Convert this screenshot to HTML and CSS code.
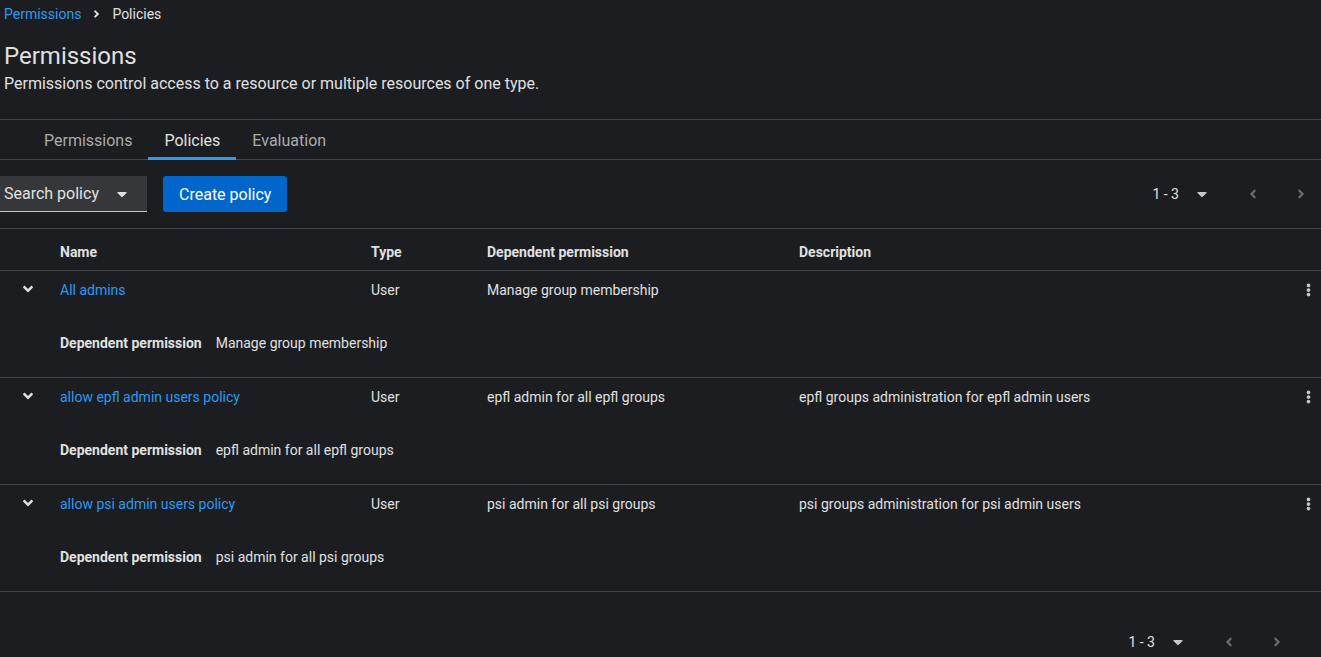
FILE: index.html
```html
<!DOCTYPE html>
<html lang="en">
<head>
<meta charset="utf-8">
<title>Permissions - Policies</title>
<link rel="stylesheet" href="styles.css">
</head>
<body>
<nav class="breadcrumb">
  <a class="crumb-link" href="#">Permissions</a>
  <svg class="crumb-sep" viewBox="0 0 256 512"><path d="M224.3 273l-136 136c-9.4 9.4-24.6 9.4-33.9 0l-22.6-22.6c-9.4-9.4-9.4-24.6 0-33.9l96.4-96.4-96.4-96.4c-9.4-9.4-9.4-24.6 0-33.9L54.3 103c9.4-9.4 24.6-9.4 33.9 0l136 136c9.5 9.4 9.5 24.6.1 34z"/></svg>
  <span class="crumb-current">Policies</span>
</nav>

<header class="page-header">
  <h1 class="title">Permissions</h1>
  <p class="subtitle">Permissions control access to a resource or multiple resources of one type.</p>
</header>

<div class="tabs">
  <button class="tab">Permissions</button>
  <button class="tab active">Policies</button>
  <button class="tab">Evaluation</button>
</div>

<div class="toolbar">
  <div class="toolbar-left">
    <button class="search-select">
      <span>Search policy</span>
      <svg class="caret" viewBox="0 0 320 512"><path d="M31.3 192h257.3c17.8 0 26.7 21.5 14.1 34.1L174.1 354.8c-7.8 7.8-20.5 7.8-28.3 0L17.2 226.1C4.6 213.5 13.5 192 31.3 192z"/></svg>
    </button>
    <button class="btn-primary">Create policy</button>
  </div>
  <div class="pagination">
    <span class="page-range">1 - 3</span>
    <svg class="caret small" viewBox="0 0 320 512"><path d="M31.3 192h257.3c17.8 0 26.7 21.5 14.1 34.1L174.1 354.8c-7.8 7.8-20.5 7.8-28.3 0L17.2 226.1C4.6 213.5 13.5 192 31.3 192z"/></svg>
    <svg class="nav-arrow" viewBox="0 0 256 512"><path d="M31.7 239l136-136c9.4-9.4 24.6-9.4 33.9 0l22.6 22.6c9.4 9.4 9.4 24.6 0 33.9L127.9 256l96.4 96.4c9.4 9.4 9.4 24.6 0 33.9L201.7 409c-9.4 9.4-24.6 9.4-33.9 0l-136-136c-9.5-9.4-9.5-24.6-.1-34z"/></svg>
    <svg class="nav-arrow" viewBox="0 0 256 512"><path d="M224.3 273l-136 136c-9.4 9.4-24.6 9.4-33.9 0l-22.6-22.6c-9.4-9.4-9.4-24.6 0-33.9l96.4-96.4-96.4-96.4c-9.4-9.4-9.4-24.6 0-33.9L54.3 103c9.4-9.4 24.6-9.4 33.9 0l136 136c9.5 9.4 9.5 24.6.1 34z"/></svg>
  </div>
</div>

<div class="table">
  <div class="row head">
    <div></div>
    <div>Name</div>
    <div>Type</div>
    <div>Dependent permission</div>
    <div>Description</div>
    <div></div>
  </div>

  <div class="group">
    <div class="row main">
      <svg class="toggle" viewBox="0 0 320 512"><path d="M143 352.3L7 216.3c-9.4-9.4-9.4-24.6 0-33.9l22.6-22.6c9.4-9.4 24.6-9.4 33.9 0l96.4 96.4 96.4-96.4c9.4-9.4 24.6-9.4 33.9 0l22.6 22.6c9.4 9.4 9.4 24.6 0 33.9l-136 136c-9.2 9.4-24.4 9.4-33.8 0z"/></svg>
      <a class="link" href="#">All admins</a>
      <div>User</div>
      <div>Manage group membership</div>
      <div></div>
      <svg class="kebab" viewBox="0 0 192 512"><path d="M96 184c39.8 0 72 32.2 72 72s-32.2 72-72 72-72-32.2-72-72 32.2-72 72-72zM24 80c0 39.8 32.2 72 72 72s72-32.2 72-72S135.8 8 96 8 24 40.2 24 80zm0 352c0 39.8 32.2 72 72 72s72-32.2 72-72-32.2-72-72-72-72 32.2-72 72z"/></svg>
    </div>
    <div class="detail"><b>Dependent permission</b><span>Manage group membership</span></div>
  </div>

  <div class="group">
    <div class="row main">
      <svg class="toggle" viewBox="0 0 320 512"><path d="M143 352.3L7 216.3c-9.4-9.4-9.4-24.6 0-33.9l22.6-22.6c9.4-9.4 24.6-9.4 33.9 0l96.4 96.4 96.4-96.4c9.4-9.4 24.6-9.4 33.9 0l22.6 22.6c9.4 9.4 9.4 24.6 0 33.9l-136 136c-9.2 9.4-24.4 9.4-33.8 0z"/></svg>
      <a class="link" href="#">allow epfl admin users policy</a>
      <div>User</div>
      <div>epfl admin for all epfl groups</div>
      <div>epfl groups administration for epfl admin users</div>
      <svg class="kebab" viewBox="0 0 192 512"><path d="M96 184c39.8 0 72 32.2 72 72s-32.2 72-72 72-72-32.2-72-72 32.2-72 72-72zM24 80c0 39.8 32.2 72 72 72s72-32.2 72-72S135.8 8 96 8 24 40.2 24 80zm0 352c0 39.8 32.2 72 72 72s72-32.2 72-72-32.2-72-72-72-72 32.2-72 72z"/></svg>
    </div>
    <div class="detail"><b>Dependent permission</b><span>epfl admin for all epfl groups</span></div>
  </div>

  <div class="group">
    <div class="row main">
      <svg class="toggle" viewBox="0 0 320 512"><path d="M143 352.3L7 216.3c-9.4-9.4-9.4-24.6 0-33.9l22.6-22.6c9.4-9.4 24.6-9.4 33.9 0l96.4 96.4 96.4-96.4c9.4-9.4 24.6-9.4 33.9 0l22.6 22.6c9.4 9.4 9.4 24.6 0 33.9l-136 136c-9.2 9.4-24.4 9.4-33.8 0z"/></svg>
      <a class="link" href="#">allow psi admin users policy</a>
      <div>User</div>
      <div>psi admin for all psi groups</div>
      <div>psi groups administration for psi admin users</div>
      <svg class="kebab" viewBox="0 0 192 512"><path d="M96 184c39.8 0 72 32.2 72 72s-32.2 72-72 72-72-32.2-72-72 32.2-72 72-72zM24 80c0 39.8 32.2 72 72 72s72-32.2 72-72S135.8 8 96 8 24 40.2 24 80zm0 352c0 39.8 32.2 72 72 72s72-32.2 72-72-32.2-72-72-72-72 32.2-72 72z"/></svg>
    </div>
    <div class="detail"><b>Dependent permission</b><span>psi admin for all psi groups</span></div>
  </div>
</div>

<div class="bottom-bar">
  <div class="pagination bottom">
    <span class="page-range">1 - 3</span>
    <svg class="caret small" viewBox="0 0 320 512"><path d="M31.3 192h257.3c17.8 0 26.7 21.5 14.1 34.1L174.1 354.8c-7.8 7.8-20.5 7.8-28.3 0L17.2 226.1C4.6 213.5 13.5 192 31.3 192z"/></svg>
    <svg class="nav-arrow" viewBox="0 0 256 512"><path d="M31.7 239l136-136c9.4-9.4 24.6-9.4 33.9 0l22.6 22.6c9.4 9.4 9.4 24.6 0 33.9L127.9 256l96.4 96.4c9.4 9.4 9.4 24.6 0 33.9L201.7 409c-9.4 9.4-24.6 9.4-33.9 0l-136-136c-9.5-9.4-9.5-24.6-.1-34z"/></svg>
    <svg class="nav-arrow" viewBox="0 0 256 512"><path d="M224.3 273l-136 136c-9.4 9.4-24.6 9.4-33.9 0l-22.6-22.6c-9.4-9.4-9.4-24.6 0-33.9l96.4-96.4-96.4-96.4c-9.4-9.4-9.4-24.6 0-33.9L54.3 103c9.4-9.4 24.6-9.4 33.9 0l136 136c9.5 9.4 9.5 24.6.1 34z"/></svg>
  </div>
</div>
</body>
</html>
```

FILE: styles.css
```css
* { box-sizing: border-box; }

html, body {
  margin: 0;
  background: #1b1d21;
  color: #e0e0e0;
  font-family: Roboto, "Liberation Sans", sans-serif;
  font-size: 14px;
}

a { text-decoration: none; }

.breadcrumb {
  display: flex;
  align-items: center;
  gap: 12px;
  padding: 4px 4px 0;
  height: 24px;
  line-height: 21px;
}
.crumb-link { color: #2b9af3; }
.crumb-current { color: #e0e0e0; }
.crumb-sep { width: 7px; height: 12px; fill: #e0e0e0; }

.page-header {
  padding: 17px 4px 23px;
}
.title {
  margin: 0;
  font-size: 24px;
  font-weight: 400;
  line-height: 31px;
}
.subtitle {
  margin: 0;
  font-size: 16px;
  line-height: 24px;
}

.tabs {
  display: flex;
  border-top: 1px solid #444548;
  border-bottom: 1px solid #444548;
  padding-left: 28px;
  height: 41px;
}
.tab {
  background: none;
  border: 0;
  font: inherit;
  font-size: 16px;
  color: #aaabac;
  padding: 2px 16px 0;
  height: 39px;
  line-height: 37px;
  position: relative;
}
.tab.active { color: #e0e0e0; }
.tab.active::after {
  content: "";
  position: absolute;
  left: 0; right: 0; bottom: -1px;
  height: 3px;
  background: #2b9af3;
}

.toolbar {
  display: flex;
  justify-content: space-between;
  align-items: center;
  padding: 16px 0;
  border-bottom: 1px solid #444548;
}
.toolbar-left {
  display: flex;
  gap: 16px;
}
.search-select {
  display: flex;
  align-items: center;
  gap: 18px;
  width: 147px;
  height: 36px;
  padding: 0 0 0 4px;
  background: #36373a;
  border: 0;
  border-bottom: 1px solid #c7c7c7;
  font: inherit;
  font-size: 16px;
  color: #e0e0e0;
}
.caret { width: 10px; height: 16px; fill: #e0e0e0; }
.caret.small { width: 10px; height: 16px; fill: #c7c7c7; }
.btn-primary {
  height: 36px;
  padding: 0 16px;
  background: #0066cc;
  color: #fff;
  border: 0;
  border-radius: 3px;
  font: inherit;
  font-size: 16px;
}

.pagination {
  display: flex;
  align-items: center;
  padding-right: 16px;
}
.page-range { margin-right: 18px; }
.nav-arrow {
  width: 8px;
  height: 14px;
  fill: #6a6e73;
  margin-left: 40px;
}
.pagination .caret.small { margin-right: 2px; }

.row {
  display: grid;
  grid-template-columns: 60px 311px 116px 312px 1fr 26px;
  align-items: center;
}
.row.head {
  height: 42px;
  padding-top: 4px;
  font-weight: 700;
  border-bottom: 1px solid #444548;
}
.group { border-bottom: 1px solid #444548; }
.row.main { height: 38px; }
.toggle {
  width: 10px;
  height: 16px;
  fill: #e0e0e0;
  justify-self: start;
  margin-left: 23px;
  margin-top: -2px;
}
.link { color: #2b9af3; }
.kebab {
  width: 5px;
  height: 16px;
  fill: #c7c7c7;
  justify-self: start;
  margin-left: 11px;
}
.detail {
  display: flex;
  gap: 14px;
  padding: 24px 0 24px 60px;
  line-height: 20px;
}

.bottom-bar {
  display: flex;
  justify-content: flex-end;
  padding: 42px 0 0;
}
.pagination.bottom { padding-right: 40px; }
```
